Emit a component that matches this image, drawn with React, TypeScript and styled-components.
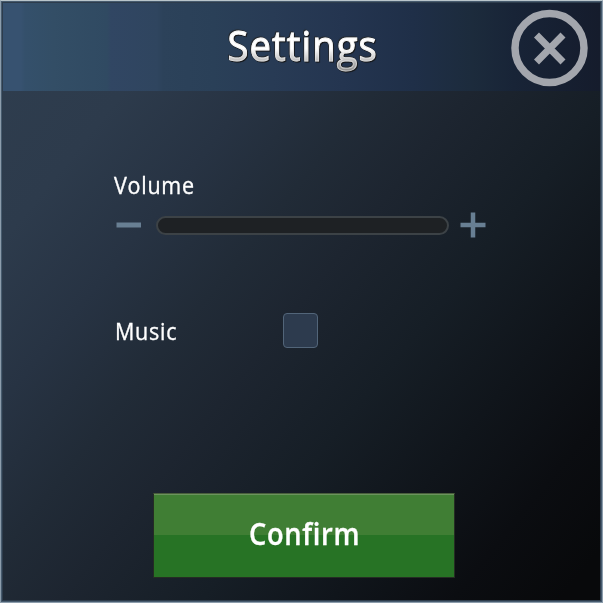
import React from "react";
import styled, { createGlobalStyle } from "styled-components";

const GlobalStyle = createGlobalStyle`
  * { box-sizing: border-box; }
  body { margin: 0; font-family: "Open Sans", "Noto Sans", sans-serif; }
  button { font: inherit; border: 0; padding: 0; background: none; cursor: pointer; }
`;

const Panel = styled.main`
  width: 603px;
  height: 603px;
  display: flex;
  flex-direction: column;
  border: 1px solid #8c9dac;
  border-top-color: #b9c5cb;
  box-shadow: inset 0 0 0 1px #475b6e, inset 0 0 0 2px #2d3c4c;
  padding: 2px 2px 1px;
  background: linear-gradient(129deg, #2f3e4f 0%, #2d3b4c 18%, #273343 30%, #212b37 41%, #1d2530 50%, #161e26 63%, #10151b 75%, #0b0d11 86%, #08090b 96%);
  overflow: hidden;
`;

const Header = styled.header`
  flex: none;
  height: 88px;
  display: grid;
  grid-template-columns: 92px 1fr 92px;
  align-items: center;
  background: linear-gradient(90deg, #375270 0, #375270 18px, #34506b 22px, #334e66 50px, #304a62 104px, #314663 108px, #2f455f 154px, #2c425a 160px, #2a4058 210px, #283b55 270px, #243550 340px, #1f2f48 410px, #1c2b3c 470px, #182437 510px, #161f31 560px, #151c2c 100%);
`;

const Label = styled.span<{ $size: number; $stretch: number; $weight?: number }>`
  display: inline-block;
  color: #fff;
  font-size: ${(p) => p.$size}px;
  font-weight: ${(p) => p.$weight ?? 400};
  line-height: 32px;
  letter-spacing: 0.8px;
  white-space: nowrap;
  -webkit-text-stroke: 0.35px #fff;
  transform: scaleX(${(p) => p.$stretch});
  transform-origin: left center;
`;

const Title = styled.h1`
  margin: 0;
  justify-self: center;
  font-size: 42px;
  font-weight: 400;
  line-height: 58px;
  letter-spacing: 1.2px;
  color: transparent;
  background: linear-gradient(#fff 0 56%, #b9b9b9 78%, #8b8b8b 94%);
  background-clip: text;
  -webkit-text-stroke: 1px rgba(245, 245, 245, 0.55);
  filter: drop-shadow(1px 1px 0.4px #17191c) drop-shadow(-0.5px -0.5px 0.3px #252a30);
  transform: translate(1px, -2px) scale(0.91, 1.02);
`;

const CloseButton = styled.button`
  grid-column: 3;
  width: 78px;
  height: 78px;
  margin: 2px 0 0 2px;
  svg { display: block; }
`;

const Content = styled.section`
  flex: 1;
  display: flex;
  flex-direction: column;
  padding: 78px 111px 23px;
`;

const VolumeRow = styled.div`
  height: 26px;
  margin-top: 11px;
  display: grid;
  grid-template-columns: 40px 293px 40px;
  justify-content: start;
  align-items: center;
  padding-left: 2px;
`;

const StepButton = styled.button`
  height: 26px;
  svg { display: block; }
`;

const Track = styled.div`
  width: 293px;
  height: 19px;
  border-radius: 10px;
  border: 2px solid #3c4246;
  background: #1e2124;
`;

const MusicRow = styled.div`
  height: 36px;
  margin-top: 74px;
  display: grid;
  grid-template-columns: 168px 35px;
  align-items: center;
  padding-left: 1px;

  ${Label} {
    padding-top: 2px;
  }
`;

const Checkbox = styled.button`
  width: 35px;
  height: 35px;
  border: 1px solid #526579;
  border-radius: 4px;
  background: #2d3b4e;
`;

const Confirm = styled.button`
  width: 302px;
  height: 85px;
  margin: auto 0 0 39px;
  border: 1px solid #252c23;
  border-top-color: #485e3b;
  background: linear-gradient(#6b935d 0 1px, #407e34 1px 41px, #277325 41px);
  display: flex;
  align-items: center;
  padding: 0 0 5px 95px;
`;

export default function App() {
  return (
    <>
      <GlobalStyle />
      <Panel>
        <Header>
          <span />
          <Title>Settings</Title>
          <CloseButton aria-label="Close">
            <svg width="78" height="78" viewBox="0 0 78 78" fill="none" stroke="#a3a6ad">
              <circle cx="39.5" cy="39" r="34.5" strokeWidth="7.5" />
              <path d="M26.5 26 53 53M53 26 26.5 53" strokeWidth="7" />
            </svg>
          </CloseButton>
        </Header>
        <Content>
          <Label $size={23.5} $stretch={0.915}>Volume</Label>
          <VolumeRow>
            <StepButton aria-label="Decrease volume">
              <svg width="27" height="26" viewBox="0 0 27 26" fill="none" stroke="#687f93">
                <path d="M0.5 13H25" strokeWidth="5" />
              </svg>
            </StepButton>
            <Track />
            <StepButton aria-label="Increase volume">
              <svg width="40" height="26" viewBox="0 0 40 26" fill="none" stroke="#687f93">
                <path d="M11.5 13H36.5M24 0.5V25.5" strokeWidth="4.5" />
              </svg>
            </StepButton>
          </VolumeRow>
          <MusicRow>
            <Label $size={23.5} $stretch={0.915}>Music</Label>
            <Checkbox role="checkbox" aria-checked={false} aria-label="Music" />
          </MusicRow>
          <Confirm>
            <Label $size={31.5} $stretch={0.865} $weight={600}>Confirm</Label>
          </Confirm>
        </Content>
      </Panel>
    </>
  );
}
